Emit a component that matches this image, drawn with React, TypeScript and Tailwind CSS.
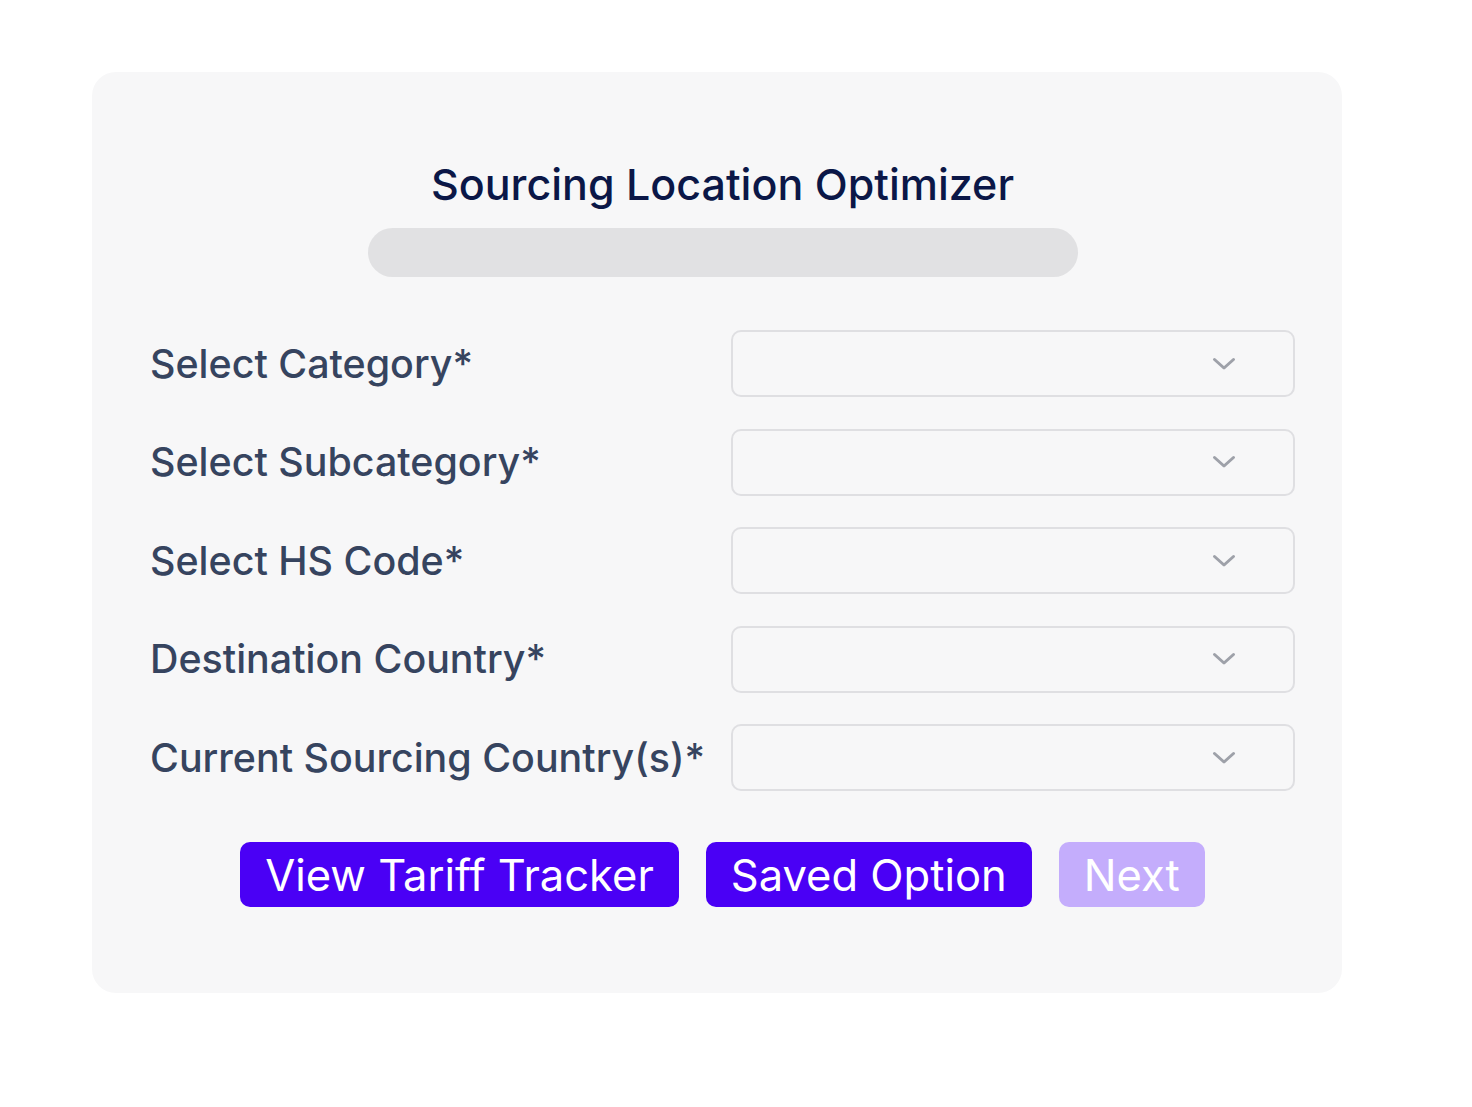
import React from 'react'

const FIELDS = [
  'Select Category*',
  'Select Subcategory*',
  'Select HS Code*',
  'Destination Country*',
  'Current Sourcing Country(s)*',
]

function Chevron() {
  return (
    <svg width="24" height="14" viewBox="0 0 24 14" fill="none">
      <polyline points="2.5,2.5 12,11 21.5,2.5" stroke="#9ea1a9" strokeWidth="3" strokeLinecap="round" strokeLinejoin="round" />
    </svg>
  )
}

export default function App() {
  return (
    <div className="min-h-screen bg-white font-['Inter',sans-serif] pt-[72px] pl-[92px]">
      <div className="w-[1250px] rounded-[24px] bg-[#f7f7f8] pt-[86px] pb-[86px] pl-[58px] pr-[47px]">
        {/* Heading + progress */}
        <div className="flex flex-col items-center">
          <h1 className="text-[43px] leading-[52px] font-medium text-[#0b1747]">
            Sourcing Location Optimizer
          </h1>
          <div className="mt-[18px] h-[49px] w-[710px] rounded-full bg-[#e1e1e3]" />
        </div>

        {/* Form rows */}
        <div className="mt-[53px] flex flex-col gap-[31.5px]">
          {FIELDS.map(label => (
            <div key={label} className="flex items-center">
              <label className="w-[581px] shrink-0 text-[39.4px] leading-[46px] font-medium text-[#36445f]">
                {label}
              </label>
              <div className="flex-1 h-[67px] rounded-[10px] border-2 border-[#dfdfe2] bg-[#f7f7f8] flex items-center justify-end pr-[57px]">
                <Chevron />
              </div>
            </div>
          ))}
        </div>

        {/* Actions */}
        <div className="mt-[51px] flex justify-center gap-[27px]">
          <button className="h-[65px] px-[25px] rounded-[10px] bg-[#4a00f5] text-white text-[43.5px] leading-[52px]">
            View Tariff Tracker
          </button>
          <button className="h-[65px] px-[25px] rounded-[10px] bg-[#4a00f5] text-white text-[43.5px] leading-[52px]">
            Saved Option
          </button>
          <button disabled className="h-[65px] px-[25px] rounded-[10px] bg-[#c4adfc] text-white text-[43.5px] leading-[52px] cursor-not-allowed">
            Next
          </button>
        </div>
      </div>
    </div>
  )
}
